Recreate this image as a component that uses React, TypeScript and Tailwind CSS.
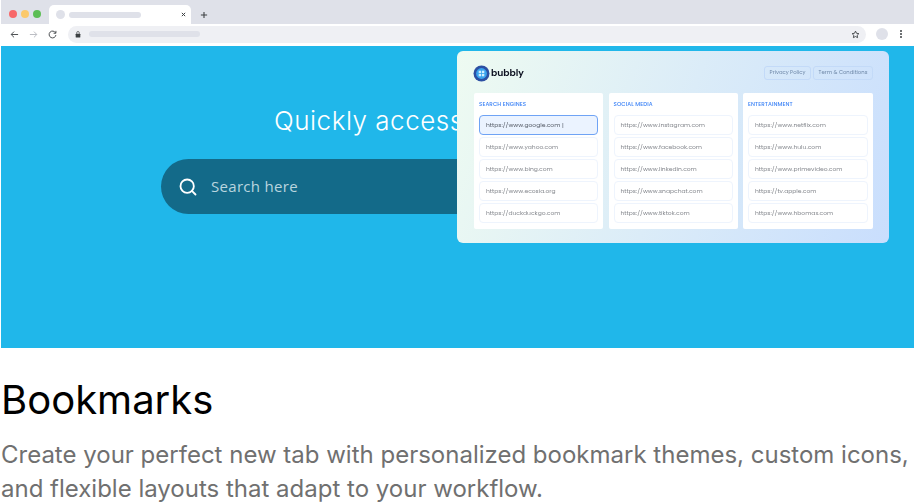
import { Search } from "lucide-react";

const columns = [
  {
    title: "SEARCH ENGINES",
    links: [
      "https://www.google.com |",
      "https://www.yahoo.com",
      "https://www.bing.com",
      "https://www.ecosia.org",
      "https://duckduckgo.com",
    ],
  },
  {
    title: "SOCIAL MEDIA",
    links: [
      "https://www.instagram.com",
      "https://www.facebook.com",
      "https://www.linkedin.com",
      "https://www.snapchat.com",
      "https://www.tiktok.com",
    ],
  },
  {
    title: "ENTERTAINMENT",
    links: [
      "https://www.netflix.com",
      "https://www.hulu.com",
      "https://www.primevideo.com",
      "https://tv.apple.com",
      "https://www.hbomax.com",
    ],
  },
];

const BrowserChrome = () => (
  <div>
    {/* Tab strip */}
    <div className="h-[24px] bg-[#dfe1e9] flex items-end pl-[8px]">
      <div className="flex gap-[4px] h-[24px] items-center pt-[4px] mr-[8px]">
        <span className="w-[8px] h-[8px] rounded-full bg-[#f8686a]" />
        <span className="w-[8px] h-[8px] rounded-full bg-[#fbc96b]" />
        <span className="w-[8px] h-[8px] rounded-full bg-[#5dbe55]" />
      </div>
      <div className="w-[142px] h-[19px] bg-white rounded-t-[5px] flex items-center pl-[7px] pr-[5px]">
        <span className="w-[9px] h-[9px] rounded-full bg-[#dfe1e9]" />
        <span className="ml-[4px] w-[72px] h-[6px] rounded-full bg-[#dfe1e9]" />
        <svg className="ml-auto" width="5" height="5" viewBox="0 0 6 6" stroke="#3c4043" strokeWidth="1.2">
          <path d="M1 1l4 4M5 1l-4 4" />
        </svg>
      </div>
      <svg className="ml-[9px] mb-[5px]" width="8" height="8" viewBox="0 0 9 9" stroke="#3c4043" strokeWidth="1.2">
        <path d="M4.5 1v7M1 4.5h7" />
      </svg>
    </div>
    {/* Address row */}
    <div className="h-[20px] bg-white flex items-center pl-[9px] pr-[12px]">
      <svg width="9" height="9" viewBox="0 0 10 10" fill="none" stroke="#3c4043" strokeWidth="1">
        <path d="M9 5H1.5M4.5 1.8L1.3 5l3.2 3.2" />
      </svg>
      <svg className="ml-[10px]" width="9" height="9" viewBox="0 0 10 10" fill="none" stroke="#b4b7bd" strokeWidth="1">
        <path d="M1 5h7.5M5.5 1.8L8.7 5 5.5 8.2" />
      </svg>
      <svg className="ml-[10px]" width="9" height="9" viewBox="0 0 10 10" fill="none" stroke="#3c4043" strokeWidth="1">
        <path d="M8.4 3.2A3.8 3.8 0 1 0 8.8 5.6" />
        <path d="M8.8 1v2.6H6.2" />
      </svg>
      <div className="ml-[11px] flex-1 h-[17px] rounded-full bg-[#eff0f4] flex items-center pl-[7px] pr-[6px]">
        <svg width="6" height="7" viewBox="0 0 7 8">
          <rect x="0.8" y="3" width="5.4" height="4.6" rx="0.8" fill="#3c4043" />
          <path d="M2 3.2V2a1.5 1.5 0 0 1 3 0v1.2" fill="none" stroke="#3c4043" strokeWidth="0.8" />
        </svg>
        <span className="ml-[8px] w-[111px] h-[6px] rounded-full bg-[#dfe1e9]" />
        <svg className="ml-auto" width="9" height="9" viewBox="0 0 24 24" fill="none" stroke="#3c4043" strokeWidth="2.4">
          <path d="M12 3l2.8 5.8 6.2.9-4.5 4.4 1.1 6.3L12 17.4l-5.6 3 1.1-6.3L3 9.7l6.2-.9z" />
        </svg>
      </div>
      <span className="ml-[10px] w-[12px] h-[12px] rounded-full bg-[#dfe1e9]" />
      <div className="ml-[12px] flex flex-col gap-[1px]">
        <span className="w-[2px] h-[2px] rounded-full bg-[#3c4043]" />
        <span className="w-[2px] h-[2px] rounded-full bg-[#3c4043]" />
        <span className="w-[2px] h-[2px] rounded-full bg-[#3c4043]" />
      </div>
    </div>
  </div>
);

const BookmarksPanel = () => (
  <div className="absolute left-[456px] top-[5px] w-[432px] h-[192px] rounded-[6px] bg-linear-110 from-[#eefbf1] via-[#dbecf8] to-[#c9defd] pl-[17px] pr-[16px] pt-[14px] font-['Poppins','Lato',sans-serif] blur-[0.3px]">
    {/* Panel header */}
    <div className="flex items-center justify-between h-[16px]">
      <div className="flex items-center -ml-[1px]">
        <svg width="17" height="17" viewBox="0 0 17 17">
          <circle cx="8.5" cy="8.5" r="8" fill="#2c4fa3" />
          <circle cx="8.5" cy="8.5" r="5.4" fill="#3aa3ee" />
          <rect x="5.7" y="5.7" width="2.4" height="2.4" fill="#cfeeff" />
          <rect x="8.9" y="5.7" width="2.4" height="2.4" fill="#cfeeff" />
          <rect x="5.7" y="8.9" width="2.4" height="2.4" fill="#cfeeff" />
          <rect x="8.9" y="8.9" width="2.4" height="2.4" fill="#cfeeff" />
        </svg>
        <span className="ml-[1px] text-[9.2px] font-semibold text-[#0c1020] leading-none">bubbly</span>
      </div>
      <div className="flex gap-[2px]">
        <span className="h-[14px] w-[47px] flex items-center justify-center rounded-[3px] border border-[#c3daf8] text-[5.3px] text-[#6f88a8]">Privacy Policy</span>
        <span className="h-[14px] w-[60px] flex items-center justify-center rounded-[3px] border border-[#c3daf8] text-[5.3px] text-[#6f88a8]">Term &amp; Conditions</span>
      </div>
    </div>
    {/* Link columns */}
    <div className="mt-[12px] grid grid-cols-[129px_129px_130px] gap-[5.5px]">
      {columns.map((col) => (
        <div key={col.title} className="h-[136px] bg-white rounded-[2px] px-[5px] pt-[7px]">
          <div className="text-[5.5px] leading-[8px] font-medium text-[#3b82f6] tracking-[0.1px]">{col.title}</div>
          <div className="mt-[7px] flex flex-col gap-[2px]">
            {col.links.map((link, i) => (
              <div
                key={link}
                className={`h-[20px] flex items-center pl-[6px] rounded-[4px] border text-[6px] ${
                  col.title === "SEARCH ENGINES" && i === 0
                    ? "bg-[#ebf3ff] border-[#6fa3f5] text-[#555b66]"
                    : "bg-white border-[#eef4fd] text-[#85888e]"
                }`}
              >
                {link}
              </div>
            ))}
          </div>
        </div>
      ))}
    </div>
  </div>
);

export default function App() {
  return (
    <div className="w-[915px] h-[502px] overflow-hidden bg-white pl-[1px] pr-[1px] font-['Inter',sans-serif]">
      <BrowserChrome />
      <div className="h-[2px] bg-white" />

      {/* Hero */}
      <div className="relative h-[302px] bg-[#20b7ea] overflow-hidden">
        <div className="pl-[273px] pt-[59px] text-[26px] leading-[32px] font-light tracking-[0.5px] text-white">
          Quickly access
        </div>
        <div className="ml-[160px] mt-[22px] w-[400px] h-[55px] rounded-l-full bg-[#136a89] flex items-center pl-[17px] gap-[13px]">
          <Search size={20} strokeWidth={2.2} className="text-white" />
          <span className="font-['Open_Sans',sans-serif] text-[15px] tracking-[0.3px] text-[#b9d5df]">Search here</span>
        </div>
        <BookmarksPanel />
      </div>

      {/* Caption */}
      <h1 className="mt-[27px] text-[40px] leading-[50px] font-normal text-black">Bookmarks</h1>
      <p className="mt-[13px] text-[24px] text-[#707070] whitespace-nowrap">
        <span className="block leading-[34px]">
          Create your perfect new tab with personalized bookmark themes, custom icons,
        </span>
        <span className="block mt-[4px] leading-[26px]">and flexible layouts that adapt to your workflow.</span>
      </p>
    </div>
  );
}
